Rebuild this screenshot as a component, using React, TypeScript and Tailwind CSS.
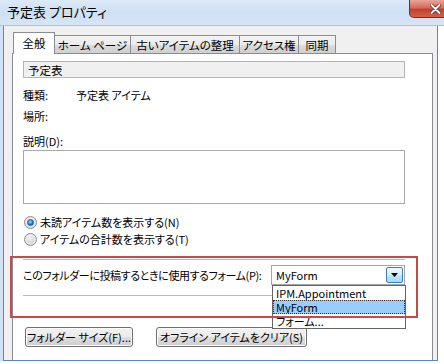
import React from "react";

function Radio({ checked }: { checked?: boolean }) {
  return (
    <span className="flex items-center justify-center w-[13px] h-[13px] rounded-full border border-[#8c8c8c] bg-[radial-gradient(circle_at_50%_40%,#ffffff,#d4d4d4)] shrink-0">
      {checked ? (
        <span className="block w-[7px] h-[7px] rounded-full bg-[radial-gradient(circle_at_40%_35%,#9fdcff,#2a86d8_55%,#0d4f9e)] border border-[#1b4f8a]" />
      ) : (
        <span className="block w-[7px] h-[7px] rounded-full bg-[radial-gradient(circle_at_40%_35%,#f4f4f4,#c8c8c8)]" />
      )}
    </span>
  );
}

function Tab({ label, w, active }: { label: string; w: string; active?: boolean }) {
  if (active) {
    return (
      <div
        className={`${w} h-[22px] -mb-px z-10 bg-white border border-b-0 border-[#898c95] flex items-center justify-center pb-[2px] whitespace-nowrap`}
      >
        {label}
      </div>
    );
  }
  return (
    <div
      className={`${w} h-[18px] -ml-px border border-b-0 border-[#898c95] bg-[linear-gradient(#f3f3f3,#ebebeb_50%,#dddddd_51%,#cfcfcf)] flex items-center justify-center whitespace-nowrap`}
    >
      {label}
    </div>
  );
}

function Btn({ label, w }: { label: string; w: string }) {
  return (
    <div
      className={`${w} h-[20px] rounded-[3px] border border-[#707070] bg-[linear-gradient(#f2f2f2,#ebebeb_50%,#dddddd_51%,#cfcfcf)] flex items-center justify-center shadow-[inset_0_0_0_1px_#fcfcfc] whitespace-nowrap`}
    >
      {label}
    </div>
  );
}

export default function App() {
  return (
    <div className="relative w-[444px] h-[364px] overflow-hidden bg-white text-black text-[11px] leading-[16px] font-['Noto_Sans_CJK_JP','Noto_Sans',sans-serif] [font-feature-settings:'palt']">
      {/* Title bar */}
      <div className="h-[26px] flex items-center pl-[7px] bg-[linear-gradient(#dce9f7,#cfe0f3_50%,#d6e5f6)] border-b border-[#aabfd9]">
        <span className="text-[13px] leading-[16px] pb-[2px]">予定表 プロパティ</span>
      </div>
      {/* Close button */}
      <div className="absolute left-[409px] top-0 w-[44px] h-[18px] rounded-bl-[5px] border border-[#7e2a22] border-t-0 bg-[linear-gradient(#e9a595,#d66a58_45%,#c2402f_55%,#d2604c)] flex items-center pl-[20px]">
        <svg width="11" height="10" viewBox="0 0 11 10">
          <path d="M1.5 1 L9.5 9 M9.5 1 L1.5 9" stroke="#5b1a12" strokeWidth="3.4" strokeLinecap="round" />
          <path d="M1.5 1 L9.5 9 M9.5 1 L1.5 9" stroke="#ffffff" strokeWidth="2" strokeLinecap="round" />
        </svg>
      </div>

      {/* Body */}
      <div className="flex h-[335px]">
        <div className="w-[3px] bg-[#d3e2f3]" />
        <div className="w-[435px] h-full border-x border-b border-[#5a86c4] bg-[#f0f0f0] pl-[8px] pt-[6px] overflow-hidden">
          {/* Tabs */}
          <div className="flex items-end pl-[1px] text-[11.5px]">
            <Tab label="全般" w="w-[42px]" active />
            <Tab label="ホーム ページ" w="w-[77px]" />
            <Tab label="古いアイテムの整理" w="w-[110px]" />
            <Tab label="アクセス権" w="w-[60px]" />
            <Tab label="同期" w="w-[38px]" />
          </div>
          {/* Panel */}
          <div className="w-[421px] h-[320px] border border-[#898c95] bg-white pl-[10px] pt-[7px] flex flex-col">
            <div className="w-[382px] h-[17px] border border-[#b4b4b4] bg-[#f0f0f0] pl-[4px] flex items-center text-[11.5px]">
              予定表
            </div>
            <div className="flex mt-[9px] h-[16px] items-center">
              <span className="w-[53px]">種類:</span>
              <span>予定表 アイテム</span>
            </div>
            <div className="mt-[5px] h-[16px] flex items-center">場所:</div>
            <div className="mt-[9px] h-[16px] flex items-center">説明(D):</div>
            <div className="mt-px w-[382px] h-[54px] border border-[#a9a9a9] bg-white" />
            <div className="mt-[10px] h-[16px] flex items-center gap-[3px] pl-[1px]">
              <Radio checked />
              <span className="whitespace-nowrap">未読アイテム数を表示する(N)</span>
            </div>
            <div className="mt-px h-[16px] flex items-center gap-[3px] pl-[1px]">
              <Radio />
              <span className="whitespace-nowrap">アイテムの合計数を表示する(T)</span>
            </div>
            <div className="mt-[12px] w-[382px] h-px bg-[#b9b9b9]" />
            <div className="mt-[5px] w-[382px] h-[20px] flex items-center justify-between">
              <span className="whitespace-nowrap tracking-[-0.4px]">このフォルダーに投稿するときに使用するフォーム(P):</span>
              <div className="w-[134px] h-[20px] border border-[#a5a5a5] bg-white flex items-center pl-[4px] pr-[1px] shrink-0">
                <span className="flex-1 text-[11px]">MyForm</span>
                <div className="w-[17px] h-[16px] rounded-[2px] border border-[#3c7fb1] bg-[linear-gradient(#eaf6fd,#d9f0fc_50%,#bee6fd_51%,#a7d9f5)] flex items-center justify-center">
                  <svg width="7" height="4" viewBox="0 0 7 4">
                    <path d="M0 0 L7 0 L3.5 4 Z" fill="#000" />
                  </svg>
                </div>
              </div>
            </div>
            <div className="mt-[10px] w-[382px] h-px bg-[#b9b9b9]" />
            <div className="mt-[31px] flex gap-[23px] pl-[2px]">
              <Btn label="フォルダー サイズ(F)..." w="w-[108px]" />
              <Btn label="オフライン アイテムをクリア(S)" w="w-[151px]" />
            </div>
          </div>
        </div>
        <div className="w-[6px] bg-white" />
      </div>

      {/* Annotation red box */}
      <div className="absolute left-[10px] top-[256px] w-[408px] h-[62px] border-2 border-[#c9484a] z-20" />

      {/* Dropdown list */}
      <div className="absolute left-[272px] top-[285px] w-[134px] h-[44px] border border-[#646464] bg-white z-10 flex flex-col text-[11px] leading-[14px]">
        <div className="h-[14px] pl-[3px] whitespace-nowrap overflow-hidden">IPM.Appointment</div>
        <div className="h-[14px] leading-[12px] pl-[2px] bg-[#99ccff] border border-dotted border-[#333] overflow-hidden">MyForm</div>
        <div className="h-[14px] pl-[3px] overflow-hidden">フォーム...</div>
      </div>
    </div>
  );
}
